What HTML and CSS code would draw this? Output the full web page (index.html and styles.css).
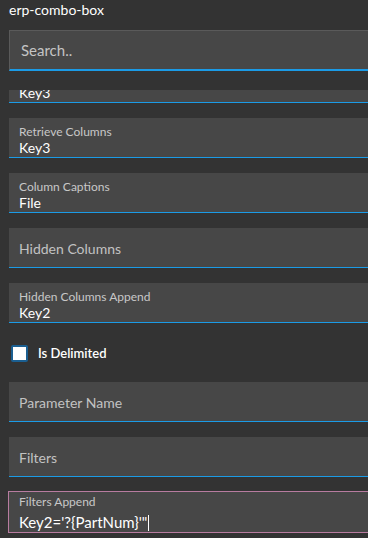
FILE: index.html
```html
<!DOCTYPE html>
<html>
<head>
    <title>erp-combo-box</title>
    <meta name="viewport" content="width=device-width, initial-scale=1.0">
    <link rel="stylesheet" href="styles.css">
</head>
<body>
    <div class="title">erp-combo-box</div>

    <div class="search">Search..</div>

    <div class="list">
        <div class="list-inner">
            <div class="field">
                <div class="label">Retrieve Keys</div>
                <div class="value">Key3</div>
            </div>
            <div class="field">
                <div class="label">Retrieve Columns</div>
                <div class="value">Key3</div>
            </div>
            <div class="field">
                <div class="label">Column Captions</div>
                <div class="value">File</div>
            </div>
            <div class="field empty">
                <div class="placeholder">Hidden Columns</div>
            </div>
            <div class="field">
                <div class="label">Hidden Columns Append</div>
                <div class="value">Key2</div>
            </div>
            <div class="check-row">
                <span class="checkbox"></span>
                <span class="check-label">Is Delimited</span>
            </div>
            <div class="field empty">
                <div class="placeholder">Parameter Name</div>
            </div>
            <div class="field empty">
                <div class="placeholder">Filters</div>
            </div>
            <div class="field focused">
                <div class="label">Filters Append</div>
                <div class="value">Key2='?{PartNum}'"<span class="caret"></span></div>
            </div>
        </div>
    </div>
</body>
</html>
```

FILE: styles.css
```css
body {
    margin: 0;
    background-color: #333333;
    color: #ffffff;
    font-family: Lato, "Noto Sans", sans-serif;
    overflow: hidden;
    height: 538px;
}

.title {
    font-size: 14px;
    line-height: 18px;
    padding: 1px 9px 0;
    height: 29px;
}

.search {
    margin: 0 -20px 0 9px;
    box-sizing: border-box;
    height: 41px;
    padding: 10px 11px 0;
    background-color: #474747;
    border: 1px solid #5a5a5a;
    border-bottom: 2px solid #1b9be6;
    color: #c4c4c4;
    font-size: 15px;
}

.list {
    margin-top: 19px;
    height: 448px;
    overflow: hidden;
}

.list-inner {
    margin-top: -27px;
}

.field {
    margin: 0 -20px 15px 9px;
    height: 40px;
    box-sizing: border-box;
    padding: 6px 10px 0;
    background-color: #474747;
    border-bottom: 1px solid #1b9be6;
}

.label {
    font-size: 12px;
    line-height: 15px;
    color: #c8c8c8;
}

.value {
    font-size: 14px;
    line-height: 18px;
    color: #ffffff;
}

.field.empty {
    padding-top: 12px;
}

.placeholder {
    font-size: 14px;
    line-height: 18px;
    color: #c2c2c2;
}

.field.focused {
    margin: -1px -20px 0 8px;
    height: 42px;
    padding: 2px 10px 0;
    border: 1px solid #b87ca0;
}

.field.focused .value {
    font-size: 15px;
    margin-top: 4px;
}

.caret {
    display: inline-block;
    width: 1px;
    height: 16px;
    background-color: #ffffff;
    vertical-align: -3px;
    margin-left: 1px;
}

.check-row {
    display: flex;
    align-items: center;
    height: 29px;
    margin: 0 0 15px 11px;
}

.checkbox {
    width: 13px;
    height: 13px;
    background-color: #ffffff;
    border: 2px solid #1b5f91;
    border-radius: 2px;
    margin-top: 1px;
}

.check-label {
    margin-left: 10px;
    font-size: 13px;
    font-weight: 600;
    color: #ffffff;
}
```
